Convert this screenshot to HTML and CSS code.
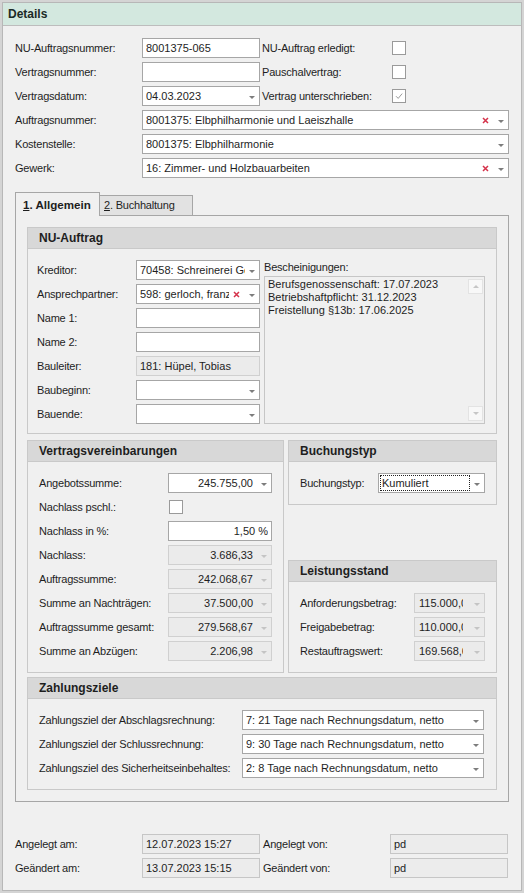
FILE: index.html
```html
<!DOCTYPE html>
<html lang="de">
<head>
<meta charset="utf-8">
<title>Details</title>
<link rel="stylesheet" href="styles.css">
</head>
<body>
<div class="panel">
  <div class="panel-header">Details</div>

  <div class="top">
    <div class="row">
      <span class="lbl top-lbl">NU-Auftragsnummer:</span>
      <div class="inp top-inp"><span class="val">8001375-065</span></div>
      <span class="lbl top-lbl2">NU-Auftrag erledigt:</span>
      <span class="chk"></span>
    </div>
    <div class="row">
      <span class="lbl top-lbl">Vertragsnummer:</span>
      <div class="inp top-inp"><span class="val"></span></div>
      <span class="lbl top-lbl2">Pauschalvertrag:</span>
      <span class="chk"></span>
    </div>
    <div class="row">
      <span class="lbl top-lbl">Vertragsdatum:</span>
      <div class="inp top-inp"><span class="val">04.03.2023</span><span class="arr"></span></div>
      <span class="lbl top-lbl2">Vertrag unterschrieben:</span>
      <span class="chk"><svg width="10" height="10" viewBox="0 0 10 10"><path d="M2 5.2L4.2 7.4L8.2 2.6" fill="none" stroke="#9a9a9a" stroke-width="1"/></svg></span>
    </div>
    <div class="row">
      <span class="lbl top-lbl">Auftragsnummer:</span>
      <div class="inp top-wide"><span class="val">8001375: Elbphilharmonie und Laeiszhalle</span><svg class="clr" width="7" height="7" viewBox="0 0 7 7"><path d="M1 1L6 6M6 1L1 6" stroke="#d5324a" stroke-width="1.5"/></svg><span class="arr"></span></div>
    </div>
    <div class="row">
      <span class="lbl top-lbl">Kostenstelle:</span>
      <div class="inp top-wide"><span class="val">8001375: Elbphilharmonie</span><span class="arr"></span></div>
    </div>
    <div class="row">
      <span class="lbl top-lbl">Gewerk:</span>
      <div class="inp top-wide"><span class="val">16: Zimmer- und Holzbauarbeiten</span><svg class="clr" width="7" height="7" viewBox="0 0 7 7"><path d="M1 1L6 6M6 1L1 6" stroke="#d5324a" stroke-width="1.5"/></svg><span class="arr"></span></div>
    </div>
  </div>

  <div class="tabs">
    <div class="tab active"><span class="u">1</span>. Allgemein</div>
    <div class="tab"><span class="u">2</span>. Buchhaltung</div>
  </div>

  <div class="tabpanel">
    <div class="group">
      <div class="ghead">NU-Auftrag</div>
      <div class="gbody nu">
        <div class="nu-left">
          <div class="row">
            <span class="lbl nu-lbl">Kreditor:</span>
            <div class="inp nu-inp"><span class="val">70458: Schreinerei Gerloch</span><span class="arr"></span></div>
          </div>
          <div class="row">
            <span class="lbl nu-lbl">Ansprechpartner:</span>
            <div class="inp nu-inp"><span class="val">598: gerloch, franz</span><svg class="clr" width="7" height="7" viewBox="0 0 7 7"><path d="M1 1L6 6M6 1L1 6" stroke="#d5324a" stroke-width="1.5"/></svg><span class="arr"></span></div>
          </div>
          <div class="row">
            <span class="lbl nu-lbl">Name 1:</span>
            <div class="inp nu-inp"><span class="val"></span></div>
          </div>
          <div class="row">
            <span class="lbl nu-lbl">Name 2:</span>
            <div class="inp nu-inp"><span class="val"></span></div>
          </div>
          <div class="row">
            <span class="lbl nu-lbl">Bauleiter:</span>
            <div class="inp nu-inp ro"><span class="val">181: Hüpel, Tobias</span></div>
          </div>
          <div class="row">
            <span class="lbl nu-lbl">Baubeginn:</span>
            <div class="inp nu-inp"><span class="val"></span><span class="arr"></span></div>
          </div>
          <div class="row">
            <span class="lbl nu-lbl">Bauende:</span>
            <div class="inp nu-inp"><span class="val"></span><span class="arr"></span></div>
          </div>
        </div>
        <div class="nu-right">
          <div class="lbl list-lbl">Bescheinigungen:</div>
          <div class="listbox">
            <div class="list-items">
              <div>Berufsgenossenschaft: 17.07.2023</div>
              <div>Betriebshaftpflicht: 31.12.2023</div>
              <div>Freistellung §13b: 17.06.2025</div>
            </div>
            <div class="scroll">
              <span class="sb"><span class="tri-up"></span></span>
              <span class="sb"><span class="tri-down"></span></span>
            </div>
          </div>
        </div>
      </div>
    </div>

    <div class="mid">
      <div class="group vv">
        <div class="ghead">Vertragsvereinbarungen</div>
        <div class="gbody">
          <div class="row">
            <span class="lbl vv-lbl">Angebotssumme:</span>
            <div class="inp vv-inp num"><span class="val">245.755,00</span><span class="arr"></span></div>
          </div>
          <div class="row">
            <span class="lbl vv-lbl">Nachlass pschl.:</span>
            <span class="chk chk-left"></span>
          </div>
          <div class="row">
            <span class="lbl vv-lbl">Nachlass in %:</span>
            <div class="inp vv-inp num pct"><span class="val">1,50 %</span></div>
          </div>
          <div class="row">
            <span class="lbl vv-lbl">Nachlass:</span>
            <div class="inp vv-inp num ro"><span class="val">3.686,33</span><span class="arr"></span></div>
          </div>
          <div class="row">
            <span class="lbl vv-lbl">Auftragssumme:</span>
            <div class="inp vv-inp num ro"><span class="val">242.068,67</span><span class="arr"></span></div>
          </div>
          <div class="row">
            <span class="lbl vv-lbl">Summe an Nachträgen:</span>
            <div class="inp vv-inp num ro"><span class="val">37.500,00</span><span class="arr"></span></div>
          </div>
          <div class="row">
            <span class="lbl vv-lbl">Auftragssumme gesamt:</span>
            <div class="inp vv-inp num ro"><span class="val">279.568,67</span><span class="arr"></span></div>
          </div>
          <div class="row">
            <span class="lbl vv-lbl">Summe an Abzügen:</span>
            <div class="inp vv-inp num ro"><span class="val">2.206,98</span><span class="arr"></span></div>
          </div>
        </div>
      </div>

      <div class="rightcol">
        <div class="group">
          <div class="ghead">Buchungstyp</div>
          <div class="gbody">
            <div class="row">
              <span class="lbl bt-lbl">Buchungstyp:</span>
              <div class="inp bt-inp"><span class="focus">Kumuliert</span><span class="arr"></span></div>
            </div>
          </div>
        </div>
        <div class="group">
          <div class="ghead">Leistungsstand</div>
          <div class="gbody">
            <div class="row">
              <span class="lbl ls-lbl">Anforderungsbetrag:</span>
              <div class="inp ls-inp num ro"><span class="val">115.000,00</span><span class="arr"></span></div>
            </div>
            <div class="row">
              <span class="lbl ls-lbl">Freigabebetrag:</span>
              <div class="inp ls-inp num ro"><span class="val">110.000,00</span><span class="arr"></span></div>
            </div>
            <div class="row">
              <span class="lbl ls-lbl">Restauftragswert:</span>
              <div class="inp ls-inp num ro"><span class="val">169.568,67</span><span class="arr"></span></div>
            </div>
          </div>
        </div>
      </div>
    </div>

    <div class="group zz">
      <div class="ghead">Zahlungsziele</div>
      <div class="gbody">
        <div class="row">
          <span class="lbl zz-lbl">Zahlungsziel der Abschlagsrechnung:</span>
          <div class="inp zz-inp"><span class="val">7: 21 Tage nach Rechnungsdatum, netto</span><span class="arr"></span></div>
        </div>
        <div class="row">
          <span class="lbl zz-lbl">Zahlungsziel der Schlussrechnung:</span>
          <div class="inp zz-inp"><span class="val">9: 30 Tage nach Rechnungsdatum, netto</span><span class="arr"></span></div>
        </div>
        <div class="row">
          <span class="lbl zz-lbl">Zahlungsziel des Sicherheitseinbehaltes:</span>
          <div class="inp zz-inp"><span class="val">2: 8 Tage nach Rechnungsdatum, netto</span><span class="arr"></span></div>
        </div>
      </div>
    </div>
  </div>

  <div class="footer">
    <div class="row">
      <span class="lbl top-lbl">Angelegt am:</span>
      <div class="inp top-inp ro soft"><span class="val">12.07.2023 15:27</span></div>
      <span class="lbl foot-lbl2">Angelegt von:</span>
      <div class="inp top-inp ro soft"><span class="val">pd</span></div>
    </div>
    <div class="row">
      <span class="lbl top-lbl">Geändert am:</span>
      <div class="inp top-inp ro soft"><span class="val">13.07.2023 15:15</span></div>
      <span class="lbl foot-lbl2">Geändert von:</span>
      <div class="inp top-inp ro soft"><span class="val">pd</span></div>
    </div>
  </div>
</div>
</body>
</html>
```

FILE: styles.css
```css
* { box-sizing: border-box; }

html, body {
  margin: 0;
  padding: 0;
}

body {
  background: #d4d4d4;
  font-family: "Liberation Sans", Arial, sans-serif;
  font-size: 11px;
  color: #1e1e1e;
  width: 524px;
  height: 893px;
  overflow: hidden;
}

.panel {
  margin: 2px 2px 0 2px;
  width: 520px;
  height: 889px;
  background: #f0f0f0;
  border: 1px solid #b7b7b7;
}

.panel-header {
  height: 23px;
  background: #d3e8df;
  border-bottom: 1px solid #bdbdbd;
  padding-left: 5px;
  font-weight: bold;
  font-size: 12px;
  line-height: 22px;
  color: #1c2b27;
}

.row {
  display: flex;
  align-items: center;
  height: 20px;
  margin-bottom: 4px;
}
.row:last-child { margin-bottom: 0; }

.lbl {
  letter-spacing: -0.2px;
  white-space: nowrap;
  flex: none;
}

.inp {
  flex: none;
  height: 20px;
  border: 1px solid #a6a6a6;
  background: #ffffff;
  display: flex;
  align-items: center;
  padding-left: 3px;
  overflow: hidden;
}

.inp .val {
  flex: 1;
  min-width: 0;
  white-space: nowrap;
  overflow: hidden;
  line-height: 18px;
}

.inp.ro {
  background: #ebebeb;
  border-color: #d0d0d0;
}
.inp.ro .arr { border-top-color: #c4c4c4; }
.inp.soft { background: #ececec; border-color: #c6c6c6; }

.arr {
  flex: none;
  width: 0;
  height: 0;
  border-left: 3.5px solid transparent;
  border-right: 3.5px solid transparent;
  border-top: 3px solid #7d7d7d;
  margin: 2px 4px 0 4px;
}

.clr {
  flex: none;
  display: block;
  margin: 1px 5px 0 4px;
}

.chk {
  flex: none;
  width: 14px;
  height: 14px;
  border: 1px solid #9a9a9a;
  background: #ffffff;
  display: flex;
  align-items: center;
  justify-content: center;
}
.chk svg { display: block; }

/* top section */
.top {
  padding: 12px 0 0 12px;
}
.top-lbl { width: 127px; }
.top-inp { width: 118px; }
.top-wide { width: 367px; }
.top-lbl2 { width: 130px; margin-left: 2px; }

/* tabs */
.tabs {
  display: flex;
  align-items: flex-end;
  margin: 14px 0 0 12px;
  height: 23px;
}
.tab {
  height: 20px;
  width: 93px;
  border: 1px solid #a6a6a6;
  border-left: none;
  border-bottom: none;
  background: #e2e2e2;
  padding-left: 4px;
  line-height: 19px;
  letter-spacing: -0.2px;
}
.tab.active {
  position: relative;
  z-index: 1;
  width: 85px;
  height: 24px;
  margin-bottom: -1px;
  border-left: 1px solid #a6a6a6;
  background: #f0f0f0;
  font-weight: bold;
  font-size: 11.6px;
  padding-left: 7px;
  line-height: 23px;
  letter-spacing: 0;
}
.u { text-decoration: underline; }

.tabpanel {
  margin: 0 12px;
  width: 494px;
  border: 1px solid #a6a6a6;
  padding: 11px;
}

/* groups */
.group {
  border: 1px solid #c9c9c9;
}
.ghead {
  height: 21px;
  background: #d8d8d8;
  border-bottom: 1px solid #c9c9c9;
  padding-left: 11px;
  font-weight: bold;
  font-size: 12px;
  line-height: 20px;
  color: #1e1e1e;
}
.gbody {
  padding: 11px 11px 11px 11px;
}

.gbody.nu {
  display: flex;
  padding: 11px 11px 9px 9px;
}
.nu-lbl { width: 99px; }
.nu-inp { width: 124px; }
.nu-right {
  margin-left: 4px;
  width: 221px;
  display: flex;
  flex-direction: column;
}
.list-lbl {
  height: 16px;
  line-height: 14px;
}
.listbox {
  height: 148px;
  border: 1px solid #c6c6c6;
  background: #f0f0f0;
  display: flex;
}
.list-items {
  flex: 1;
  padding: 1px 0 0 3px;
  letter-spacing: 0;
}
.list-items div {
  line-height: 13px;
  white-space: nowrap;
}
.scroll {
  flex: none;
  display: flex;
  flex-direction: column;
  justify-content: space-between;
  padding: 2px 1px 2px 0;
}
.sb {
  width: 15px;
  height: 15px;
  border: 1px solid #e3e3e3;
  background: #f8f8f8;
  display: flex;
  align-items: center;
  justify-content: center;
}
.tri-up, .tri-down {
  width: 0;
  height: 0;
  border-left: 3.5px solid transparent;
  border-right: 3.5px solid transparent;
}
.tri-up { border-bottom: 3px solid #c6c6c6; }
.tri-down { border-top: 3px solid #c6c6c6; }

.mid {
  display: flex;
  gap: 4px;
  margin-top: 6px;
}
.group.vv { width: 257px; flex: none; }
.vv-lbl { width: 129px; }
.vv-inp { width: 104px; }
.num .val { text-align: right; padding-right: 4px; }
.num.pct { padding-right: 3px; }
.num.pct .val { padding-right: 0; }
.chk-left { margin-left: 1px; }

.rightcol {
  width: 209px;
  flex: none;
  display: flex;
  flex-direction: column;
  justify-content: space-between;
}
.bt-lbl { width: 78px; }
.bt-inp { width: 107px; padding-left: 1px; }
.focus {
  flex: none;
  width: 90px;
  height: 16px;
  border: 1px dotted #222;
  line-height: 14px;
  padding-left: 1px;
  margin-right: auto;
}
.ls-lbl { width: 114px; }
.ls-inp { width: 71px; }
.ls-inp .val {
  text-align: left;
  padding-left: 1px;
  padding-right: 0;
  margin-right: 7px;
}

.group.zz { margin-top: 4px; }
.group.zz .gbody { padding-right: 12px; }
.zz-lbl { width: 203px; }
.zz-inp { width: 242px; }

/* footer */
.footer {
  padding: 32px 0 0 12px;
}
.foot-lbl2 { width: 127px; margin-left: 3px; }
```
